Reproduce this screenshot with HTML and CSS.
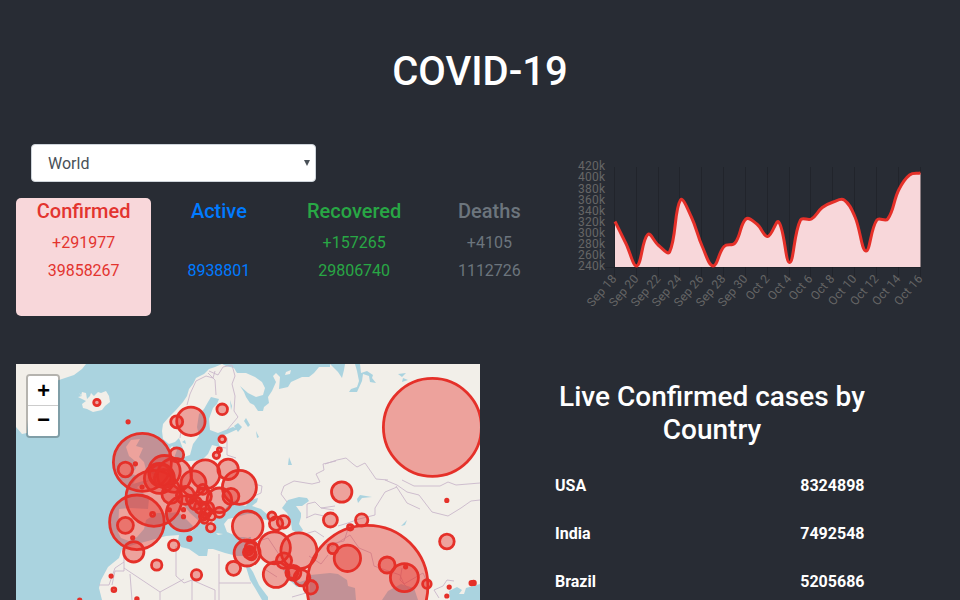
FILE: index.html
```html
<!DOCTYPE html>
<html lang="en">
<head>
<meta charset="utf-8">
<title>COVID-19</title>
<link rel="stylesheet" href="styles.css">
</head>
<body>
<header class="header"><h1>COVID-19</h1></header>
<main>
  <section class="summary">
    <div class="overview">
      <div class="select"><span>World</span><svg class="caret" width="6" height="6" viewBox="0 0 6 6"><path d="M0 0H6L3 6Z"/></svg></div>
      <div class="stats">
        <article class="stat confirmed selected"><h5>Confirmed</h5><p>+291977</p><p>39858267</p></article>
        <article class="stat active"><h5>Active</h5><p></p><p>8938801</p></article>
        <article class="stat recovered"><h5>Recovered</h5><p>+157265</p><p>29806740</p></article>
        <article class="stat deaths"><h5>Deaths</h5><p>+4105</p><p>1112726</p></article>
      </div>
    </div>
    <svg class="chart" id="chart" width="387" height="180" viewBox="557 144 387 180">
      <g id="grid"></g>
      <path id="area"/>
      <path id="line"/>
      <g id="ylabels"></g>
      <g id="xlabels"></g>
    </svg>
  </section>
  <section class="details">
    <div class="map">
      <svg width="464" height="236" viewBox="16 364 464 236">
        <rect class="sea" x="16" y="364" width="464" height="236"/>
        <g class="land">
          <path d="M16 364H86L82 369L74 375L62 379L50 383L38 398L28 420L27 433L22 434L16 427Z"/>
          <path d="M79 393l2 3 1-4 4 1 1 6 3-3 1-3 3 3 4-4 3 1 5-2 3 5 1 6-5 4-3 4-9 2-6-3-4-1-1-4 4-3-8-4 4-1z"/>
          <path d="M131 440L140 439L136 446L143 448L139 457L144 462L146 470L154 475L151 480L143 481L133 484L138 476L132 474L136 468L135 461L129 456L126 447Z"/>
          <path d="M119 464L129 461L131 469L128 476L117 477Z"/>
          <path d="M222 364L215 367L209 369L204 374L196 378L193 384L189 389L187 396L183 402L176 410L169 417L163 424L162 431L163 439L169 444L175 442L179 438L183 449L184 457L190 455L193 444L199 436L197 427L199 414L204 409L208 402L211 397L219 399L217 404L213 408L209 419L210 430L218 433L233 427L238 429L227 434L221 436L218 441L220 447L212 445L208 454L202 460L190 461L180 462L174 458L177 450L172 446L168 451L169 461L163 466L155 476L147 482L137 487L141 491L149 499L148 509L130 508L119 509L118 532L121 538L129 541L137 537L144 529L146 520L157 513L170 513L178 512L185 518L193 526L191 532L197 527L199 521L190 513L183 504L190 503L197 513L203 519L206 525L209 530L215 532L213 524L216 518L225 516L225 509L229 504L235 500L241 505L246 506L249 500L258 498L257 502L252 506L261 509L268 515L271 521L262 519L254 514L247 514L237 517L228 519L224 524L227 532L239 537L251 537L250 549L246 556L237 556L225 553L213 549L208 549L207 556L199 556L189 549L181 547L178 541L179 535L166 536L148 541L133 545L122 549L119 558L108 567L101 580L99 588L102 600H450L449 591L457 587L462 590L459 594L464 594L466 588L480 584V364H345L344 370L342 378L338 372L330 364L330 367L319 367L314 373L309 377L302 377L291 382L288 387L279 389L280 377L276 373L273 376L276 382L272 391L268 397L269 403L264 407L263 411L258 411L254 405L250 403L246 397L244 392L240 386L248 393L256 397L263 395L265 388L262 382L255 377L246 373L237 373L234 368L226 366Z"/>
          <path d="M285 375l1-3 5-2-1 4zM202 547l1 0zM216 533l7 1-5 1zM244 538l5-1-2 3z"/>
        </g>
        <g class="sea">
          <path d="M282 508L288 500L299 497L307 498L309 501L302 506L296 506L301 513L301 517L299 524L303 530L299 534L292 530L291 522L287 513Z"/>
          <path d="M246 567L249 566L253 572L259 585L268 597V600H262L255 588L250 580Z"/>
          <path d="M309 600L310 575L330 573L338 574L347 580L348 586L355 588L356 600Z"/>
          <path d="M382 600L388 591L401 584L414 588L418 600Z"/>
          <path d="M282 568l7 4 5 7 6 3 8-3v4l-11 4-9-8z"/>
          <path d="M234 426l4-3 4 4-4 5zM244 421l2-3 4 7-2 2zM256 431l3 6-2 1zM230 400l2 6-1 4zM355 364h5l1 9 6-2 6 4-1 3 4 5-6-1-1-6-6-2-1 7-5 11-8 0 2-3 6-2 2-6-2-10zM398 374l8-1-4 4zM408 380l-6 2 1-4zM357 499l3-4 12 2-10 1-4 5zM401 526l6-6-2 5zM288 465l1-8 3 8zM182 442l3-2 1 4z"/>
        </g>
        <g class="borders">
          <path d="M187 405L190 394L196 381L206 376L213 378L215 371M208 373L215 380L216 395M209 371L218 375L223 367L232 365L235 376L232 384L235 396L234 411L238 417L227 430M180 438L181 430M227 438V455L236 458M219 447L226 448"/>
          <path d="M254 484l8 2-1 7-9 4M336 461l-13 3 1 6-8 4 4 8-8 2-18-3-10 5-3 8 6 8M307 518V504L315 502L321 508L334 510M306 518l9-4 9 2"/>
          <path d="M325 464L337 460L346 458L353 464L357 467L365 463L376 479L388 480M385 480L397 485L407 492L419 495L432 512L448 516L461 508L471 501L480 500M396 486L407 503L420 509M397 487L385 492L375 508L375 515L359 519L348 523L338 526M402 480l12 6 26 0 8-4 8 3 24-2"/>
          <path d="M176 546L176 576L184 583L192 580L215 590M219 554V600M219 583H251M215 590V600M192 580L192 600M184 579L160 592V600M124 568L160 592M124 562L115 568L109 585H99M124 556V571H115L112 585M130 574L132 600M263 568l14 9M256 542l12-4M268 538l12 18M309 556l12 8 7-9M331 547l19-12 9 13 12 5 3 13 26 9 4 9 19-11 5 11M348 529l-4 12-18 4M402 568l-2 12 10 10M312 600l-6-7-14 4M305 534l10-3 9 6M434 590l9-4 4-6 7 1M434 590l5 8M321 508l14-2"/>
        </g>
        <g class="cases" transform="translate(.4 .3)">
          <circle cx="432" cy="427" r="49"/><circle cx="367" cy="585.5" r="60.5"/>
          <circle cx="142" cy="462" r="29"/><circle cx="136.5" cy="522" r="27.3"/><circle cx="153.5" cy="498" r="28"/>
          <circle cx="298.5" cy="550.5" r="18"/><circle cx="183.5" cy="513" r="17.5"/><circle cx="239" cy="487" r="17"/>
          <circle cx="174" cy="475" r="17"/><circle cx="164" cy="471" r="15.8"/><circle cx="159" cy="478" r="15"/>
          <circle cx="274" cy="547.5" r="16"/><circle cx="247.3" cy="526" r="15.3"/><circle cx="205" cy="474" r="14.5"/>
          <circle cx="190.5" cy="421" r="14.2"/><circle cx="404" cy="577.3" r="14"/><circle cx="275.7" cy="574.3" r="12.8"/>
          <circle cx="347" cy="558" r="13.2"/><circle cx="246.7" cy="552.7" r="13"/><circle cx="193" cy="483" r="12.5"/>
          <circle cx="219" cy="500" r="12.3"/><circle cx="160" cy="475" r="11"/><circle cx="163" cy="478" r="9"/>
          <circle cx="133.3" cy="551.5" r="10.2"/><circle cx="227.7" cy="469" r="10.2"/><circle cx="341.3" cy="491.7" r="10.2"/>
          <circle cx="170.5" cy="494" r="9"/><circle cx="185" cy="495" r="9"/><circle cx="203" cy="496" r="8"/>
          <circle cx="230.5" cy="496" r="8"/><circle cx="125" cy="525" r="8"/><circle cx="125" cy="469.2" r="7.3"/>
          <circle cx="176.3" cy="454.5" r="7"/><circle cx="176.3" cy="421.5" r="6"/><circle cx="96.5" cy="402.2" r="3.2"/>
          <circle cx="221.8" cy="409" r="5.3"/><circle cx="221.8" cy="439" r="3.3"/><circle cx="219" cy="449.5" r="2"/><circle cx="216" cy="455" r="3.2"/>
          <circle cx="202.5" cy="489" r="5"/><circle cx="190" cy="499" r="4"/><circle cx="195" cy="503" r="6.3"/><circle cx="200" cy="507" r="6"/>
          <circle cx="207" cy="508" r="6.5"/><circle cx="203" cy="516" r="4"/><circle cx="205" cy="513" r="5"/><circle cx="211" cy="516" r="4"/>
          <circle cx="204" cy="519" r="4"/><circle cx="219" cy="512" r="5"/><circle cx="210.3" cy="527.3" r="4.2"/>
          <circle cx="189" cy="538.5" r="1.8"/><circle cx="173.3" cy="545" r="5.2"/><circle cx="156.3" cy="564.7" r="5.2"/>
          <circle cx="196.1" cy="574.5" r="5.2"/><circle cx="233.2" cy="568" r="7"/><circle cx="249" cy="552" r="6"/>
          <circle cx="248.5" cy="551" r="3.5"/><circle cx="251" cy="554.5" r="5"/><circle cx="250" cy="547" r="5"/>
          <circle cx="271.5" cy="515.7" r="4"/><circle cx="275.7" cy="523.3" r="6.7"/><circle cx="283" cy="521.5" r="6.2"/>
          <circle cx="283.6" cy="560.3" r="7.7"/><circle cx="293" cy="572.5" r="7.5"/><circle cx="292" cy="572.5" r="5.5"/>
          <circle cx="301.5" cy="577.5" r="8"/><circle cx="310.3" cy="587" r="6.8"/><circle cx="330" cy="519.7" r="7"/>
          <circle cx="361.3" cy="519.7" r="6.2"/><circle cx="349.8" cy="527" r="2.7"/><circle cx="332.5" cy="548.3" r="5"/>
          <circle cx="386.7" cy="564.7" r="8"/><circle cx="426.5" cy="583.7" r="4.3"/><circle cx="446.5" cy="541.2" r="7.3"/>
          <circle cx="127.7" cy="421.5" r="1.2"/><circle cx="135" cy="463.5" r="1.2"/><circle cx="141.7" cy="486.8" r="1.2"/>
          <circle cx="152.2" cy="514" r="2"/><circle cx="132.3" cy="537.5" r="1.2"/><circle cx="183.1" cy="509.4" r="1.2"/>
          <circle cx="183.1" cy="516.4" r="1.2"/><circle cx="169" cy="509.5" r="1.2"/><circle cx="110.7" cy="575.8" r="1.2"/>
          <circle cx="113.5" cy="589.5" r="1.9"/><circle cx="136.5" cy="598.6" r="1.3"/><circle cx="79.3" cy="600" r="1.3"/>
          <circle cx="405.2" cy="566.5" r="1.2"/><circle cx="446.4" cy="500.1" r="1.2"/><circle cx="448.8" cy="586.8" r="1.2"/>
          <circle cx="446.4" cy="595.7" r="1.2"/><circle cx="471.3" cy="582.8" r="1.8"/><circle cx="473.2" cy="582.6" r="1.8"/>
        </g>
      </svg>
      <div class="zoom"><button aria-label="Zoom in">+</button><button aria-label="Zoom out">−</button></div>
    </div>
    <div class="countries">
      <h3>Live Confirmed cases by Country</h3>
      <div class="country"><span>USA</span><span>8324898</span></div>
      <div class="country"><span>India</span><span>7492548</span></div>
      <div class="country"><span>Brazil</span><span>5205686</span></div>
    </div>
  </section>
</main>
<script src="script.js"></script>
</body>
</html>
```
FILE: styles.css
```css
* { box-sizing: border-box; }
html, body { height: 100%; }
body { margin: 0; background: #282c34; color: #fff; font: 400 16px/1.5 Roboto, sans-serif; overflow: hidden; }
h1, h3, h5, p { margin: 0; font-weight: 500; line-height: 1.2; }
.header { height: 144px; padding-top: 48px; text-align: center; }
.header h1 { font-size: 40px; }
main { padding: 0 16px; }
.summary { display: flex; height: 220px; }
.overview { width: 541.33px; }
.select { display: flex; align-items: center; justify-content: space-between; width: 285px; height: 38px; margin: 0 0 16px 15px; padding: 0 5px 0 16px; background: #fff; border: 1px solid #ced4da; border-radius: 4px; color: #495057; }
.select span { padding-top: 2px; }
.caret { fill: #495057; }
.stats { display: grid; grid-template-columns: repeat(4, 1fr); }
.stat { height: 118px; padding-top: 1px; border-radius: 5px; text-align: center; }
.stat h5 { font-size: 20px; margin-bottom: 8px; }
.stat p { height: 24px; margin-bottom: 4px; font-weight: 400; line-height: 24px; }
.selected { background: #f8d7da; }
.confirmed { color: #e3342f; }
.active { color: #007bff; }
.recovered { color: #28a745; }
.deaths { color: #6c757d; }
.chart { flex: none; font-size: 12px; letter-spacing: .2px; }
#grid { stroke: rgba(0, 0, 0, .16); }
#area { fill: #f8d7da; }
#line { fill: none; stroke: #e53029; stroke-width: 3; }
#ylabels, #xlabels { fill: #666; text-anchor: end; }
.details { display: grid; grid-template-columns: 1fr 1fr; height: 236px; }
.map { position: relative; overflow: hidden; }
.map > svg { display: block; }
.sea { fill: #aad3df; }
.land { fill: #f2efe9; }
.borders { fill: none; stroke: #cab8cb; stroke-width: .9; }
.cases { fill: #e53029; fill-opacity: .4; stroke: #e53029; stroke-width: 2.8; }
.zoom { position: absolute; top: 10px; left: 10px; width: 34px; border: 2px solid rgba(0, 0, 0, .25); border-radius: 4px; background-clip: padding-box; }
.zoom button { display: block; width: 30px; height: 30px; padding: 1px 0 0; border: 0; border-radius: 0 0 2px 2px; background: #fff; color: #000; font: bold 22px/29px "Liberation Mono", monospace; text-indent: 1px; }
.zoom button:first-child { padding-top: 3px; border-bottom: 1px solid #ccc; border-radius: 2px 2px 0 0; line-height: 27px; }
.countries { padding: 16px 75px 0; }
.countries h3 { height: 67px; margin: 0 -15px 16px; font-size: 28px; line-height: 33px; text-align: center; }
.country { display: flex; justify-content: space-between; height: 48px; padding: 11px 4.5px 0 0; font-weight: 700; line-height: 24px; }
```
FILE: script.js
```js
const NS = "http://www.w3.org/2000/svg";
const left = 615, right = 920.5, bottom = 267, step = (right - left) / 28;
const heights = [221.5, 243.5, 266, 234.5, 245.5, 252, 200, 217, 246.5, 266, 246.5, 243, 219, 224,
  236.5, 222, 262.5, 220, 219, 207.5, 202, 200, 217, 251, 220, 219, 190, 175, 173];
const pts = heights.map((y, i) => ({ x: left + i * step, y }));

// Cardinal spline with a tension of 0.4, control points capped to the plot area.
function controls(i) {
  const p = pts[i], a = pts[i - 1] || p, b = pts[i + 1] || p;
  const d1 = Math.hypot(p.x - a.x, p.y - a.y), d2 = Math.hypot(b.x - p.x, b.y - p.y);
  const f1 = 0.4 * d1 / (d1 + d2), f2 = 0.4 * d2 / (d1 + d2);
  const cap = y => Math.min(bottom, Math.max(167, y));
  return [p.x - f1 * (b.x - a.x), cap(p.y - f1 * (b.y - a.y)), p.x + f2 * (b.x - a.x), cap(p.y + f2 * (b.y - a.y))];
}
let path = `M${pts[0].x} ${pts[0].y}`;
for (let i = 1; i < pts.length; i++) {
  const a = controls(i - 1), b = controls(i);
  path += `C${a[2]} ${a[3]} ${b[0]} ${b[1]} ${pts[i].x} ${pts[i].y}`;
}
document.getElementById("line").setAttribute("d", path);
document.getElementById("area").setAttribute("d", path + `V${bottom}H${left}Z`);

function add(id, tag, attrs, text) {
  const el = document.createElementNS(NS, tag);
  for (const k in attrs) el.setAttribute(k, attrs[k]);
  if (text) el.textContent = text;
  document.getElementById(id).appendChild(el);
}
for (let i = 0; i < 10; i++) add("ylabels", "text", { x: 605.2, y: 170.3 + i * 11.1 }, `${420 - i * 20}k`);
for (let i = 0; i < 15; i++) {
  const x = Math.round(left + i * 2 * step) - 0.5, day = 18 + i * 2;
  add("grid", "path", { d: `M${x} 167V277` });
  add("xlabels", "text", { x: 0, y: 4, transform: `translate(${x - 0.3} 276.3) rotate(-49)` },
    day <= 30 ? `Sep ${day}` : `Oct ${day - 30}`);
}
add("grid", "path", { d: "M605 267.5H920" });
```
